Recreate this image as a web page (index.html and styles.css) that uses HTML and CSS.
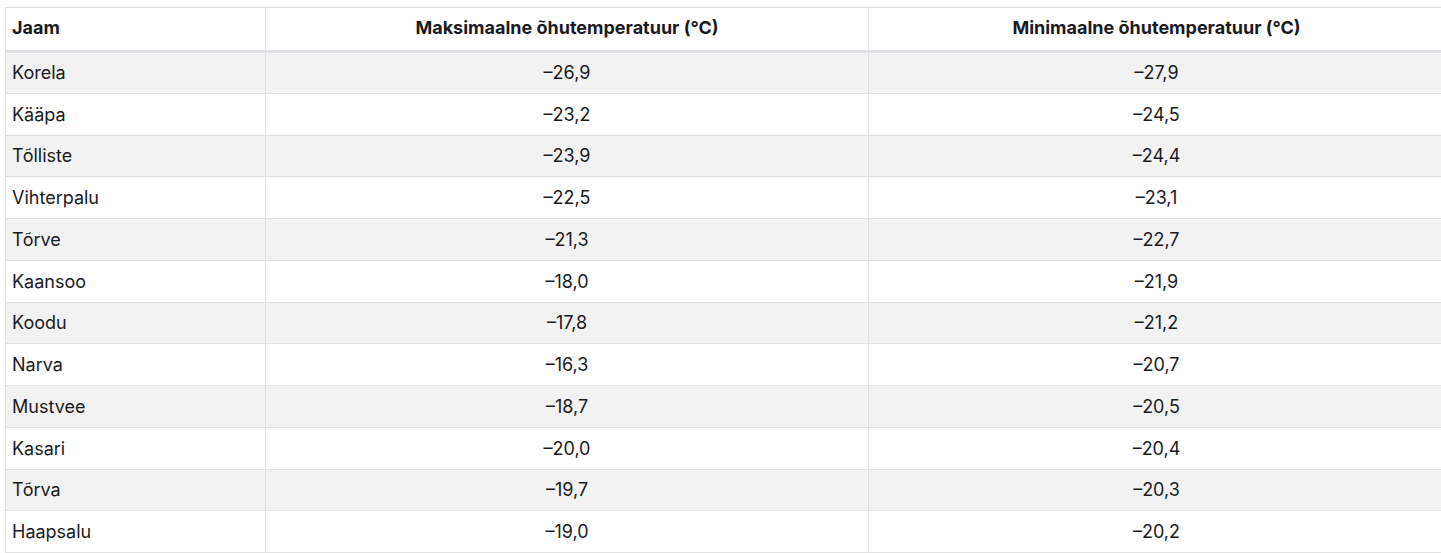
FILE: index.html
```html
<!DOCTYPE html>
<html lang="et">
<head>
<meta charset="utf-8">
<title>Õhutemperatuur</title>
<link rel="stylesheet" href="styles.css">
</head>
<body>
<table class="data">
  <thead>
    <tr>
      <th class="name">Jaam</th>
      <th>Maksimaalne õhutemperatuur (°C)</th>
      <th>Minimaalne õhutemperatuur (°C)</th>
    </tr>
  </thead>
  <tbody>
    <tr><td class="name">Korela</td><td>–26,9</td><td>–27,9</td></tr>
    <tr><td class="name">Kääpa</td><td>–23,2</td><td>–24,5</td></tr>
    <tr><td class="name">Tõlliste</td><td>–23,9</td><td>–24,4</td></tr>
    <tr><td class="name">Vihterpalu</td><td>–22,5</td><td>–23,1</td></tr>
    <tr><td class="name">Tõrve</td><td>–21,3</td><td>–22,7</td></tr>
    <tr><td class="name">Kaansoo</td><td>–18,0</td><td>–21,9</td></tr>
    <tr><td class="name">Koodu</td><td>–17,8</td><td>–21,2</td></tr>
    <tr><td class="name">Narva</td><td>–16,3</td><td>–20,7</td></tr>
    <tr><td class="name">Mustvee</td><td>–18,7</td><td>–20,5</td></tr>
    <tr><td class="name">Kasari</td><td>–20,0</td><td>–20,4</td></tr>
    <tr><td class="name">Tõrva</td><td>–19,7</td><td>–20,3</td></tr>
    <tr><td class="name">Haapsalu</td><td>–19,0</td><td>–20,2</td></tr>
  </tbody>
</table>
</body>
</html>
```
FILE: styles.css
```css
html, body {
  margin: 0;
  padding: 0;
  background: #ffffff;
  overflow: hidden;
}
body {
  padding: 7px 0 0 5px;
  font-family: Inter, "Noto Sans", sans-serif;
  color: #1a1a22;
}
.data {
  border-collapse: collapse;
  width: 1440px;
  table-layout: fixed;
  font-size: 18px;
}
.data th, .data td {
  border: 1px solid #e1e1e1;
  height: 41.75px;
  padding: 0 6px;
  text-align: center;
  vertical-align: middle;
  box-sizing: border-box;
}
.data th {
  font-weight: 700;
  height: 44px;
  padding-bottom: 3px;
  border-bottom: 3px solid #dedfe3;
}
.data th.name, .data td.name {
  text-align: left;
  width: 260px;
}
.data th:nth-child(2) { width: 603px; }
.data tbody tr:nth-child(odd) { background: #f2f2f2; }
.data td { font-weight: 400; }
```
